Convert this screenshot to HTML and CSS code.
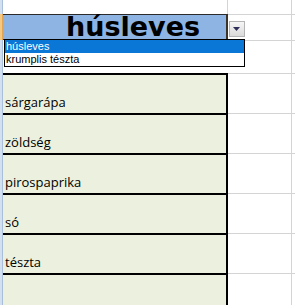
FILE: index.html
```html
<!DOCTYPE html>
<html lang="hu">
<head>
<meta charset="utf-8">
<title>húsleves</title>
<link rel="stylesheet" href="styles.css">
</head>
<body>
<div class="sheet">
  <div class="row r1"><div class="rh"></div><div class="a"></div><div class="b"></div><div class="c"></div></div>
  <div class="row r2"><div class="rh sel"></div><div class="a head">húsleves</div><div class="b"></div><div class="c"></div></div>
  <div class="row r3"><div class="rh"></div><div class="a"></div><div class="b"></div><div class="c"></div></div>
  <div class="row item"><div class="rh"></div><div class="a green">sárgarápa</div><div class="b"></div><div class="c"></div></div>
  <div class="row item"><div class="rh"></div><div class="a green">zöldség</div><div class="b"></div><div class="c"></div></div>
  <div class="row item"><div class="rh"></div><div class="a green">pirospaprika</div><div class="b"></div><div class="c"></div></div>
  <div class="row item"><div class="rh"></div><div class="a green">só</div><div class="b"></div><div class="c"></div></div>
  <div class="row item"><div class="rh"></div><div class="a green">tészta</div><div class="b"></div><div class="c"></div></div>
  <div class="row item"><div class="rh"></div><div class="a green"></div><div class="b"></div><div class="c"></div></div>

  <div class="dd-btn"><svg width="8" height="5" viewBox="0 0 8 5"><polygon points="0,0 7,0 3.5,4" fill="#2e2e58"/></svg></div>
  <ul class="dd-list">
    <li class="active">húsleves</li>
    <li>krumplis tészta</li>
  </ul>
</div>
</body>
</html>
```

FILE: styles.css
```css
html, body {
  margin: 0;
  padding: 0;
  background: #fff;
  overflow: hidden;
}

.sheet {
  position: relative;
  width: 295px;
  height: 305px;
  overflow: hidden;
}

.row {
  display: grid;
  grid-template-columns: 3px 225px 64px 1fr;
}

.r1 { height: 14px; }
.r2 { height: 26px; }
.r3 { height: 33px; }
.item { height: 40px; }

.rh {
  background: #d3e0f0;
  border-right: 1px solid #a9bfdb;
}
.rh.sel {
  background: #f6c983;
  border-right-color: #e2a553;
}

.a, .b, .c {
  box-sizing: border-box;
}

.r1 .a {
  border-right: 1px solid #d4d4d4;
}

.b {
  border-top: 1px solid #d4d4d4;
  border-right: 1px solid #d4d4d4;
}
.r1 .b { border-top: none; }
.c { border-top: 1px solid #d4d4d4; }
.r1 .c { border-top: none; }

.head {
  background: #8db4e2;
  border-top: 1px solid #2b2b2b;
  border-bottom: 1px solid #2b2b2b;
  border-right: 2px solid #3a3326;
  font-family: "DejaVu Sans", sans-serif;
  font-weight: bold;
  font-size: 27px;
  line-height: 24px;
  padding-left: 63px;
  white-space: nowrap;
  overflow: visible;
  color: #000;
}

.green {
  background: #ebf1de;
  border-top: 2px solid #000;
  border-right: 2px solid #000;
  display: flex;
  align-items: flex-end;
  padding: 0 0 2px 2px;
  font-family: "Open Sans", sans-serif;
  font-size: 13px;
  line-height: 17px;
  color: #000;
}

.dd-btn {
  position: absolute;
  left: 229px;
  top: 21px;
  width: 16px;
  height: 16px;
  box-sizing: border-box;
  border: 1px solid #b4b4b4;
  background: linear-gradient(#f6f6f6, #dadada);
  display: flex;
  align-items: center;
  justify-content: center;
}

.dd-list {
  position: absolute;
  left: 4px;
  top: 39px;
  width: 241px;
  height: 28px;
  box-sizing: border-box;
  margin: 0;
  padding: 0;
  list-style: none;
  background: #fff;
  border: 1px solid #000;
  font-family: "Liberation Sans", Arial, sans-serif;
  font-size: 11px;
}

.dd-list li {
  height: 13px;
  line-height: 13px;
  padding-left: 1px;
  color: #000;
}

.dd-list li.active {
  background: #0a76d6;
  color: #fff;
}
```
